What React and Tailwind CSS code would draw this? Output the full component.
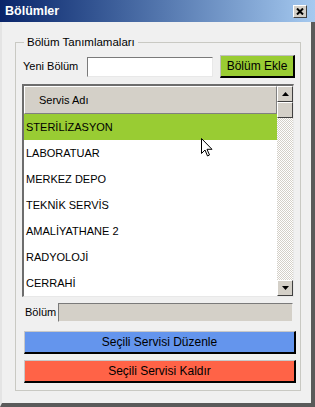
import React from "react";

const rows = [
  "STERİLİZASYON",
  "LABORATUAR",
  "MERKEZ DEPO",
  "TEKNİK SERVİS",
  "AMALİYATHANE 2",
  "RADYOLOJİ",
  "CERRAHİ",
];

function ScrollButton({ up }) {
  return (
    <div className="w-[16px] h-[16px] bg-[#d4d0c8] border border-t-white border-l-white border-r-[#404040] border-b-[#404040] flex items-center justify-center">
      <svg width="7" height="4" viewBox="0 0 7 4">
        {up ? <path d="M3.5 0 L7 4 L0 4 Z" fill="#000" /> : <path d="M0 0 L7 0 L3.5 4 Z" fill="#000" />}
      </svg>
    </div>
  );
}

export default function App() {
  return (
    <div
      className="relative w-[315px] h-[407px] bg-[#f0f0f0] border-l-2 border-l-[#e4e4e4] border-r-[4px] border-r-[#5a5a5a] border-b-[4px] border-b-[#5a5a5a] flex flex-col"
      style={{ fontFamily: '"Liberation Sans", Arial, sans-serif' }}
    >
      <div className="h-[22px] -ml-[2px] -mr-[4px] flex items-center justify-between pl-[5px] pr-[8px] bg-gradient-to-r from-[#0a246a] to-[#a6caf0]">
        <span className="text-white font-bold text-[12.5px] leading-none">Bölümler</span>
        <div className="w-[14px] h-[13px] bg-[#d4d0c8] border border-t-white border-l-white border-r-[#404040] border-b-[#404040] flex items-center justify-center">
          <svg width="8" height="7" viewBox="0 0 8 7">
            <path d="M1 0.5 L7 6.5 M7 0.5 L1 6.5" stroke="#000" strokeWidth="2" />
          </svg>
        </div>
      </div>

      <div className="pl-[13px] pt-[20px]">
        <div className="relative w-[286px] border border-[#c9c9c3] pl-[6px] pt-[12px] pb-[7px] text-[11px] text-black">
          <span className="absolute -top-[8px] left-[8px] bg-[#f0f0f0] px-[3px] leading-[14px] text-[11.5px]">
            Bölüm Tanımlamaları
          </span>

          <div className="flex items-center h-[23px] ml-[1px]">
            <span className="w-[64px]">Yeni Bölüm</span>
            <div className="w-[126px] h-[20px] bg-white border border-t-[#7a7a7a] border-l-[#7a7a7a] border-r-[#e8e8e8] border-b-[#e8e8e8]" />
            <button className="ml-[7px] w-[75px] h-[23px] bg-[#99cc33] border border-t-[#c0c0c0] border-l-[#c0c0c0] border-r-2 border-b-2 border-r-black border-b-black text-[12px]">
              Bölüm Ekle
            </button>
          </div>

          <div className="mt-[6px] w-[272px] h-[213px] border-t-2 border-l-2 border-r border-b border-t-[#6d6d6d] border-l-[#6d6d6d] border-r-[#e8e8e8] border-b-[#e8e8e8] bg-white flex">
            <div className="w-[253px] flex flex-col">
              <div className="h-[28px] bg-[#d4d0c8] border border-t-white border-l-white border-r-[#808080] border-b-[#808080] flex items-center pl-[14px] text-[11px]">
                Servis Adı
              </div>
              {rows.map((r, i) => (
                <div
                  key={r}
                  className={`h-[26px] flex items-center pl-[2px] text-[11px] ${i === 0 ? "bg-[#99cc33]" : ""}`}
                >
                  {r}
                </div>
              ))}
            </div>
            <div className="w-[16px] flex flex-col">
              <ScrollButton up />
              <div className="w-[16px] h-[16px] bg-[#d4d0c8] border border-t-white border-l-white border-r-[#404040] border-b-[#404040]" />
              <div className="flex-1 bg-[image:repeating-conic-gradient(#d4d0c8_0_25%,#ffffff_0_50%)] bg-[length:2px_2px]" />
              <ScrollButton />
            </div>
          </div>

          <div className="mt-[6px] flex items-center ml-[3px]">
            <span className="w-[33px]">Bölüm</span>
            <div className="w-[235px] h-[19px] bg-[#d4d0c8] border border-t-[#7a7a7a] border-l-[#7a7a7a] border-r-[#f0f0f0] border-b-[#f0f0f0]" />
          </div>

          <button className="mt-[9px] ml-[2px] w-[272px] h-[23px] bg-[#6495ed] border border-t-[#c8c8c8] border-l-[#c8c8c8] border-r-2 border-b-2 border-r-black border-b-black text-[12px] block">
            Seçili Servisi Düzenle
          </button>
          <button className="mt-[6px] ml-[2px] w-[272px] h-[23px] bg-[#ff6347] border border-t-[#c8c8c8] border-l-[#c8c8c8] border-r-2 border-b-2 border-r-black border-b-black text-[12px] block">
            Seçili Servisi Kaldır
          </button>
        </div>
      </div>

      <svg className="absolute left-[199px] top-[138px]" width="13" height="20" viewBox="0 0 13 20">
        <path d="M0.5 0.5 L0.5 15.5 L4 12 L6.5 18 L8.5 17 L6 11.3 L11 11.3 Z" fill="#fff" stroke="#000" strokeWidth="1" />
      </svg>
    </div>
  );
}
